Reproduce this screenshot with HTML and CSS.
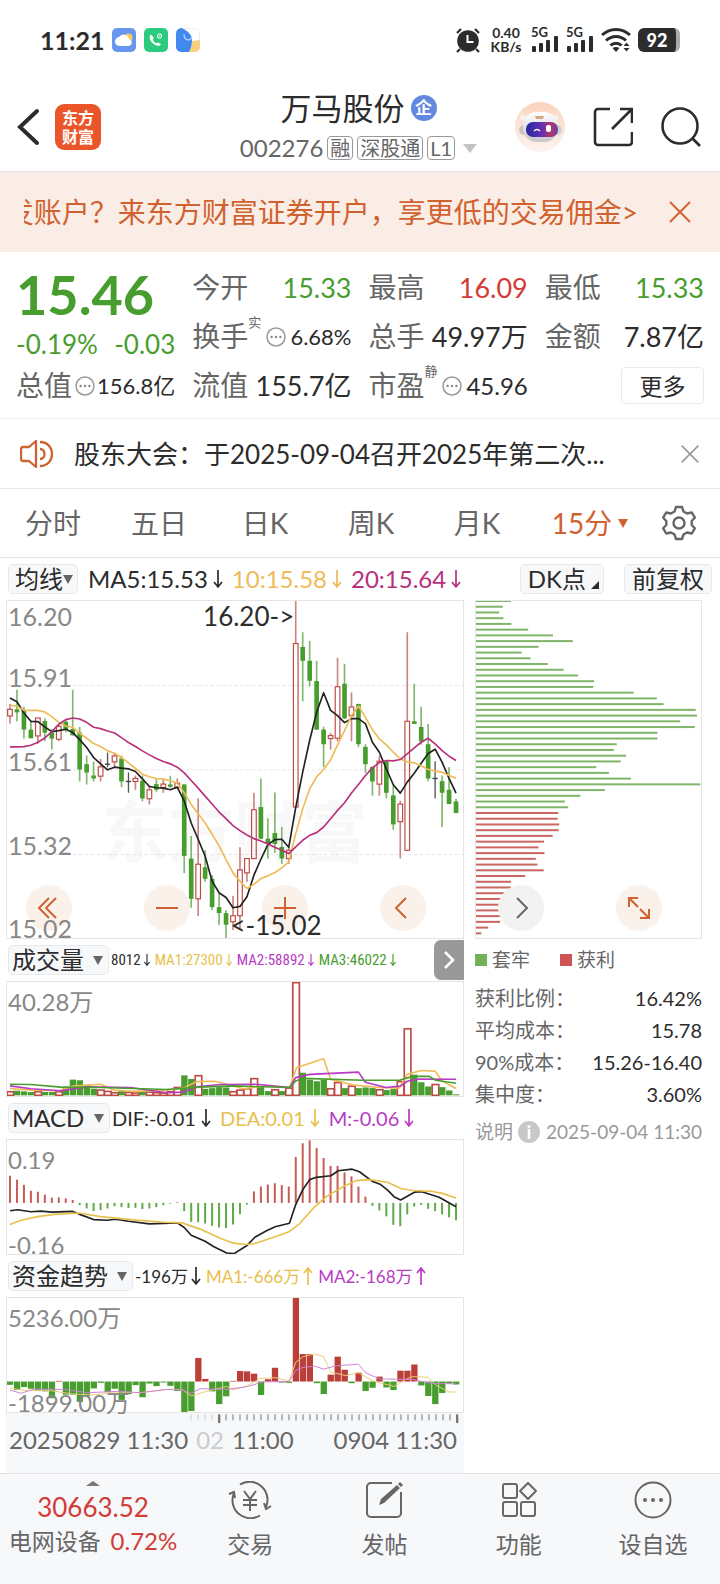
FILE: index.html
```html
<!DOCTYPE html>
<html lang="zh-CN">
<head>
<meta charset="utf-8">
<meta name="viewport" content="width=device-width, initial-scale=1">
<title>万马股份 002276</title>
<link rel="stylesheet" href="styles.css">
</head>
<body>
<svg class="defs" aria-hidden="true">
  <symbol id="down" viewBox="0 0 12 20"><path d="M6 1v17M2 13l4 5 4-5" fill="none" stroke="currentColor" stroke-width="1.700"/></symbol>
  <symbol id="up" viewBox="0 0 12 20"><path d="M6 19V2M2 7l4-5 4 5" fill="none" stroke="currentColor" stroke-width="1.700"/></symbol>
  <symbol id="dots" viewBox="0 0 20 20"><circle cx="10" cy="10" r="9" fill="none" stroke="#999" stroke-width="1.500"/><g fill="#888"><circle cx="5.600" cy="10" r="1.200"/><circle cx="10" cy="10" r="1.200"/><circle cx="14.400" cy="10" r="1.200"/></g></symbol>
  <symbol id="close" viewBox="0 0 24 24"><path d="M2 2l20 20M22 2L2 22" fill="none" stroke="currentColor" stroke-width="2"/></symbol>
  <symbol id="signal" viewBox="0 0 28 26"><g fill="#2c2c2c"><rect x="1" y="19" width="4" height="6" rx="1"/><rect x="8" y="16" width="4" height="9" rx="1"/><rect x="15" y="13" width="4" height="12" rx="1"/><rect x="23" y="9" width="4" height="16" rx="1"/></g></symbol>
</svg>

<div class="status">
  <span class="clock">11:21</span>
  <span class="apps">
    <svg width="24" height="24" viewBox="0 0 24 24"><rect width="24" height="24" rx="5" fill="#6696f0"/><circle cx="16.500" cy="9.500" r="4" fill="#f6c95c"/><path d="M8 18a4.500 4.500 0 0 1-1-9 5.500 5.500 0 0 1 10 2 3.600 3.600 0 0 1 0 7z" fill="#fff"/></svg>
    <svg width="24" height="24" viewBox="0 0 24 24"><rect width="24" height="24" rx="5" fill="#2dcb7d"/><path d="M7 6.500c-2.500 2-1 6 1.500 8.500s6.500 4 8.500 1.500l-2.700-2-2 .8c-1.800-.8-2.800-2-3.500-3.600l1-1.900z" fill="#fff"/><circle cx="15.500" cy="8" r="2.200" fill="none" stroke="#fff"/><path d="M14 9.500l3-3" stroke="#fff"/></svg>
    <svg width="24" height="24" viewBox="0 0 24 24"><rect x=".5" y=".5" width="23" height="23" rx="5" fill="#fff" stroke="#eee"/><path d="M5 0c6 2 11 6 11 13 0 5-1 8-3 11H5a5 5 0 0 1-5-5V6a6 6 0 0 1 5-6z" fill="#4189ee"/><path d="M16 13l8-1v7a5 5 0 0 1-5 5h-6c2-3 3-6 3-11z" fill="#f7cf7d"/><path d="M8 6c0 7 7 8 8 2" fill="none" stroke="#b9d6ff" stroke-width="1.200"/></svg>
  </span>
  <span class="system">
    <svg width="26" height="26" viewBox="0 0 26 26"><circle cx="13" cy="14" r="10.800" fill="#2c2c2c"/><path d="M2 6l4-4M24 6l-4-4M5 22l-3 3M21 22l3 3" stroke="#2c2c2c" stroke-width="2.200"/><path d="M12.500 8v7h6" fill="none" stroke="#fff" stroke-width="2"/></svg>
    <span class="speed"><b>0.40</b><b>KB/s</b></span>
    <span class="cell"><b>5G</b><svg width="28" height="26"><use href="#signal"/></svg></span>
    <span class="cell"><b>5G</b><svg width="28" height="26"><use href="#signal"/></svg></span>
    <svg width="30" height="26" viewBox="0 0 30 26"><g fill="none" stroke="#2c2c2c" stroke-width="3"><path d="M1 8c8-7.500 20-7.500 28 0"/><path d="M5 13.500c6-5.500 14-5.500 20 0"/><path d="M9.500 18.500c3-3 8-3 11 0"/></g><path d="M11.500 21c2-1.500 5-1.500 7 0L15 25zM22.500 19l3-3.500 3 3.500zM22.500 21l3 3.500 3-3.500z" fill="#2c2c2c"/></svg>
    <span class="battery">92</span>
  </span>
</div>

<header class="header">
  <div class="header-side">
    <button class="icon-btn" aria-label="返回"><svg width="24" height="38" viewBox="0 0 24 38"><path d="M21 3L4 19l17 16" fill="none" stroke="#2c2c2c" stroke-width="4" stroke-linecap="round"/></svg></button>
    <div class="logo"><span>东方</span><span>财富</span></div>
  </div>
  <div class="title">
    <h1>万马股份<span class="badge">企</span></h1>
    <div class="code">002276<i>融</i><i>深股通</i><i>L1</i><span class="tri tri-light"></span></div>
  </div>
  <div class="header-side header-right">
    <svg width="50" height="50" viewBox="0 0 50 50"><defs><linearGradient id="peach" x2="0" y2="1"><stop stop-color="#fbd3bd"/><stop offset="1" stop-color="#fdf5f1"/></linearGradient><linearGradient id="visor"><stop stop-color="#29289c"/><stop offset=".45" stop-color="#5b2fb4"/><stop offset=".8" stop-color="#b33768"/><stop offset="1" stop-color="#5b46b0"/></linearGradient><linearGradient id="shell" x2="0" y2="1"><stop stop-color="#fff"/><stop offset="1" stop-color="#c9c4ca"/></linearGradient></defs><circle cx="25" cy="25" r="25" fill="url(#peach)"/><circle cx="9" cy="28" r="5" fill="#c9c3c6"/><circle cx="42" cy="28" r="5" fill="#d6cfd1"/><path d="M10 19c-6-1-6-4-3-8 1 4 5 3 7 2M38 19c7-1 6-4 3-7 0 3-3 3-6 1" fill="#f7f2f1"/><rect x="8" y="10" width="35" height="30" rx="14" fill="url(#shell)"/><rect x="11" y="20" width="32" height="15" rx="7" fill="url(#visor)"/><path d="M20 14h9l-1 3h-7z" fill="#dba880"/><path d="M19 29q3-3 6 0" fill="none" stroke="#fff" stroke-width="1.500"/><rect x="31" y="23" width="5" height="7" rx="2" fill="#fff"/></svg>
    <button class="icon-btn" aria-label="分享"><svg width="40" height="40" viewBox="0 0 40 40"><path d="M17 2H5a3 3 0 0 0-3 3v30a3 3 0 0 0 3 3h31a3 3 0 0 0 3-3V25M27 2h12v14M38 3L19 22" fill="none" stroke="#2c2c2c" stroke-width="2.600"/></svg></button>
    <button class="icon-btn" aria-label="搜索"><svg width="40" height="40" viewBox="0 0 40 40"><circle cx="19" cy="19" r="17.500" fill="none" stroke="#2c2c2c" stroke-width="2.600"/><path d="M31 31l8 8" stroke="#2c2c2c" stroke-width="2.600"/></svg></button>
  </div>
</header>

<div class="banner">
  <a class="banner-text" href="#open">发账户？来东方财富证券开户，享更低的交易佣金&gt;</a>
  <button class="icon-btn orange" aria-label="关闭"><svg width="24" height="24"><use href="#close"/></svg></button>
</div>

<section class="quote">
  <div class="price down-c">
    <strong>15.46</strong>
    <div class="change"><span>-0.19%</span><span>-0.03</span></div>
  </div>
  <div class="item"><span>今开</span><b class="down-c">15.33</b></div>
  <div class="item"><span>最高</span><b class="up-c">16.09</b></div>
  <div class="item"><span>最低</span><b class="down-c">15.33</b></div>
  <div class="item"><span>换手<sup>实</sup></span><svg width="20" height="20"><use href="#dots"/></svg><b class="small">6.68%</b></div>
  <div class="item"><span>总手</span><b>49.97万</b></div>
  <div class="item"><span>金额</span><b>7.87亿</b></div>
  <div class="item"><span>总值</span><svg width="20" height="20"><use href="#dots"/></svg><b class="small">156.8亿</b></div>
  <div class="item"><span>流值</span><b>155.7亿</b></div>
  <div class="item"><span>市盈<sup>静</sup></span><svg width="20" height="20"><use href="#dots"/></svg><b class="mid">45.96</b></div>
  <div class="item end"><button class="more">更多</button></div>
</section>

<div class="notice">
  <svg width="34" height="30" viewBox="0 0 34 30"><g fill="none" stroke="#d0622f" stroke-width="2.300" stroke-linejoin="round"><path d="M16 2v26l-7-6H3a2 2 0 0 1-2-2V10a2 2 0 0 1 2-2h6z"/><path d="M20 10c6 0 6 10 0 10M20 3c16 0 16 24 0 24"/></g></svg>
  <a href="#notice">股东大会：于2025-09-04召开2025年第二次...</a>
  <button class="icon-btn gray" aria-label="关闭"><svg width="20" height="20"><use href="#close"/></svg></button>
</div>

<nav class="tabs">
  <button>分时</button><button>五日</button><button>日K</button><button>周K</button><button>月K</button>
  <button class="active">15分<span class="tri"></span></button>
  <button class="gear" aria-label="设置"><svg width="36" height="36" viewBox="0 0 36 36"><path d="M15 2h6l1.500 4.500 3.500 2 4.800-1 3 5.200L30.700 16v4l3.100 3.300-3 5.200-4.800-1-3.500 2L21 34h-6l-1.500-4.500-3.500-2-4.800 1-3-5.200L5.300 20v-4l-3.100-3.300 3-5.200 4.800 1 3.500-2z" fill="none" stroke="#666" stroke-width="2.400" stroke-linejoin="round"/><circle cx="18" cy="18" r="5.500" fill="none" stroke="#666" stroke-width="2.400"/></svg></button>
</nav>

<div class="toolbar">
  <label class="pick tight"><select aria-label="指标"><option>均线</option></select></label>
  <div class="legend large"><span>MA5:15.53<svg><use href="#down"/></svg></span><span class="yellow">10:15.58<svg><use href="#down"/></svg></span><span class="magenta">20:15.64<svg><use href="#down"/></svg></span></div>
  <button class="chip dk">DK点</button>
  <button class="chip">前复权</button>
</div>

<main class="board">
  <div class="charts">
    <div class="plot tall">
      <svg class="canvas" id="kline" viewBox="0 0 1374 1014" preserveAspectRatio="none"></svg>
      <div class="rail left-rail">
        <button class="round" aria-label="最早"><svg width="24" height="24" viewBox="0 0 24 24"><path d="M12 2L2 12l10 10M19 2L9 12l10 10"/></svg></button>
        <button class="round" aria-label="缩小"><svg width="24" height="24" viewBox="0 0 24 24"><path d="M1 12h22"/></svg></button>
        <button class="round" aria-label="放大"><svg width="24" height="24" viewBox="0 0 24 24"><path d="M1 12h22M12 1v22"/></svg></button>
        <button class="round" aria-label="向左"><svg width="24" height="24" viewBox="0 0 24 24"><path d="M15 2L5 12l10 10"/></svg></button>
      </div>
      <span class="axis a0">16.20</span><span class="axis a1">15.91</span><span class="axis a2">15.61</span><span class="axis a3">15.32</span><span class="axis a4">15.02</span>
      <span class="mark high">16.20-&gt;</span><span class="mark low">&lt;-15.02</span>
    </div>
    <div class="head">
      <label class="pick"><select aria-label="指标"><option>成交量</option></select></label>
      <div class="legend narrow"><span>8012<svg><use href="#down"/></svg></span><span class="yellow2">MA1:27300<svg><use href="#down"/></svg></span><span class="purple">MA2:58892<svg><use href="#down"/></svg></span><span class="green">MA3:46022<svg><use href="#down"/></svg></span></div>
      <button class="expand" aria-label="展开"><svg width="12" height="20" viewBox="0 0 12 20"><path d="M2 2l8 8-8 8" fill="none" stroke="#fff" stroke-width="2.600"/></svg></button>
    </div>
    <div class="plot">
      <svg class="canvas" id="volume" viewBox="0 0 1374 348" preserveAspectRatio="none"></svg>
      <span class="axis top">40.28万</span>
    </div>
    <div class="head">
      <label class="pick"><select aria-label="指标"><option>MACD</option></select></label>
      <div class="legend"><span>DIF:-0.01<svg><use href="#down"/></svg></span><span class="yellow2">DEA:0.01<svg><use href="#down"/></svg></span><span class="purple">M:-0.06<svg><use href="#down"/></svg></span></div>
    </div>
    <div class="plot">
      <svg class="canvas" id="macd" viewBox="0 0 1374 348" preserveAspectRatio="none"></svg>
      <span class="axis top">0.19</span><span class="axis base">-0.16</span>
    </div>
    <div class="head">
      <label class="pick"><select aria-label="指标"><option>资金趋势</option></select></label>
      <div class="legend mid-narrow"><span>-196万<svg><use href="#down"/></svg></span><span class="yellow2">MA1:-666万<svg><use href="#up"/></svg></span><span class="purple">MA2:-168万<svg><use href="#up"/></svg></span></div>
    </div>
    <div class="plot">
      <svg class="canvas" id="flow" viewBox="0 0 1374 348" preserveAspectRatio="none"></svg>
      <span class="axis top">5236.00万</span><span class="axis base">-1899.00万</span>
    </div>
    <div class="timeline">
      <svg id="ticks" viewBox="0 0 1374 30" preserveAspectRatio="none"></svg>
      <div class="times"><span>20250829 11:30</span><span class="faded">02</span><span>11:00</span><span class="last">0904 11:30</span></div>
    </div>
  </div>

  <aside class="chips">
    <div class="plot tall">
      <svg class="canvas" id="cost" viewBox="0 0 681 1014" preserveAspectRatio="none"></svg>
      <div class="rail right-rail">
        <button class="round plain" aria-label="向右"><svg width="24" height="24" viewBox="0 0 24 24"><path d="M8 2l10 10L8 22"/></svg></button>
        <button class="round" aria-label="全屏"><svg width="24" height="24" viewBox="0 0 24 24"><path d="M11 2H2v9M2 2l9 9M13 22h9v-9M22 22l-9-9"/></svg></button>
      </div>
    </div>
    <div class="keys"><span class="key trapped">套牢</span><span class="key profit">获利</span></div>
    <dl>
      <div><dt>获利比例：</dt><dd>16.42%</dd></div>
      <div><dt>平均成本：</dt><dd>15.78</dd></div>
      <div><dt>90%成本：</dt><dd>15.26-16.40</dd></div>
      <div><dt>集中度：</dt><dd>3.60%</dd></div>
    </dl>
    <div class="explain"><span>说明</span><span class="info">i</span><time>2025-09-04 11:30</time></div>
  </aside>
</main>

<nav class="dock">
  <a class="index" href="#index"><span class="caret"></span><b>30663.52</b><span>电网设备 <em>0.72%</em></span></a>
  <a href="#trade"><svg width="44" height="38" viewBox="0 0 44 38"><g fill="none" stroke="#666" stroke-width="2"><path d="M12 3.500A18 18 0 0 1 38 26M32 34.500A18 18 0 0 1 6 12M1 13l5-2 1 6M43 25l-5 3-2-6"/><path d="M16 10l6 8 6-8M22 18v12M15 19h14M15 24h14"/></g></svg><span>交易</span></a>
  <a href="#post"><svg width="38" height="38" viewBox="0 0 38 38"><path d="M27 2H6a4 4 0 0 0-4 4v26a4 4 0 0 0 4 4h26a4 4 0 0 0 4-4V11" fill="none" stroke="#666" stroke-width="2"/><path d="M14 24l2-6L32 4l3 3-16 15zM33 3l2-2 3 3-2 2z" fill="#666"/></svg><span>发帖</span></a>
  <a href="#tools"><svg width="38" height="38" viewBox="0 0 38 38"><g fill="none" stroke="#666" stroke-width="2"><rect x="3" y="3" width="14" height="14" rx="2"/><rect x="3" y="21" width="14" height="14" rx="2"/><rect x="21" y="21" width="14" height="14" rx="2"/><path d="M28 2l8 8-8 8-8-8z" stroke-linejoin="round"/></g></svg><span>功能</span></a>
  <a href="#watch"><svg width="38" height="38" viewBox="0 0 38 38"><circle cx="19" cy="19" r="17.500" fill="none" stroke="#666" stroke-width="2"/><g fill="#666"><circle cx="11" cy="19" r="2"/><circle cx="19" cy="19" r="2"/><circle cx="27" cy="19" r="2"/></g></svg><span>设自选</span></a>
</nav>
<script src="charts.js"></script>
</body>
</html>
```
FILE: styles.css
```css
* { box-sizing: border-box; }
body {
  margin: 0;
  background: #fff;
  color: #2c2c2c;
  font-family: Lato, "Noto Sans CJK SC", sans-serif;
  font-size: 20px;
  line-height: 1;
}
button, select { font: inherit; color: inherit; background: none; border: 0; padding: 0; margin: 0; }
a { color: inherit; text-decoration: none; }
svg { display: block; flex: none; }
b, em, i { font-weight: 400; font-style: normal; }
.defs { position: absolute; width: 0; height: 0; }
.icon-btn { display: flex; align-items: center; justify-content: center; }
.orange { color: #d0622f; }
.gray { color: #999; }
.up-c { color: #d23c37; }
.down-c { color: #479d2e; }
.tri { display: inline-block; border: 6px solid transparent; border-top: 9px solid currentColor; border-bottom: 0; }
.tri-light { border-width: 9px 7px 0; color: #c4c4c4; }

.status { display: flex; align-items: center; height: 80px; padding: 0 40px; }
.clock { width: 72px; font-size: 25px; font-weight: 700; }
.apps { display: flex; gap: 8px; }
.system { display: flex; align-items: center; gap: 7px; margin-left: auto; }
.speed { display: flex; flex-direction: column; align-items: center; width: 36px; }
.speed b { font-size: 14px; line-height: 14px; font-weight: 700; }
.cell { position: relative; }
.cell b { position: absolute; left: 0; top: 0; font-size: 13px; line-height: 10px; font-weight: 700; }
.battery { width: 42px; height: 24px; border-radius: 6px; border-right: 4px solid #aaa; background: #2c2c2c; color: #fff; font-size: 18px; line-height: 24px; font-weight: 900; text-align: center; }

.header { display: flex; align-items: center; height: 92px; padding: 2px 19px 0 16px; border-bottom: 1px solid #e4e4e8; }
.header-side { display: flex; align-items: center; flex: 1; gap: 15px; }
.header-right { justify-content: flex-end; gap: 28px; }
.logo { display: flex; flex-direction: column; align-items: center; justify-content: center; width: 46px; height: 46px; border-radius: 9px; background: #ea562a; color: #fff; font-size: 16px; line-height: 19px; font-weight: 700; }
.title { display: flex; flex-direction: column; align-items: center; gap: 7px; }
.title h1 { display: flex; align-items: center; gap: 6px; margin: 0; font-size: 31px; line-height: 36px; font-weight: 400; }
.badge { width: 26px; height: 26px; border-radius: 50%; background: #6388e0; color: #fff; font-size: 17px; line-height: 25px; font-weight: 700; text-align: center; }
.code { display: flex; align-items: center; gap: 4px; font-size: 24px; line-height: 30px; color: #666; }
.code i { border: 1px solid #999; border-radius: 4px; padding: 0 2px; font-size: 20px; line-height: 22px; }
.code .tri { margin-left: 4px; }

.banner { display: flex; align-items: center; justify-content: space-between; height: 80px; padding: 0 28px 0 24px; background: #faede6; color: #d0622f; }
.banner-text { display: flex; justify-content: flex-end; width: 614px; overflow: hidden; font-size: 28px; line-height: 40px; white-space: nowrap; }

.quote { display: grid; grid-template-columns: repeat(4, 1fr); grid-template-rows: repeat(3, 49px); column-gap: 17px; padding: 11px 16px 8px; border-bottom: 1px solid #f0f0f0; }
.price { grid-row: span 2; }
.price strong { display: block; font-size: 54px; line-height: 64px; font-weight: 700; }
.change { display: flex; justify-content: space-between; font-size: 26px; line-height: 34px; }
.item { display: flex; align-items: center; justify-content: space-between; white-space: nowrap; color: #666; font-size: 28px; line-height: 49px; }
.item span { display: flex; }
.item sup { font-size: 13px; line-height: 20px; }
.item b { color: #2c2c2c; font-size: 27px; }
.item b.small { font-size: 22px; }
.item b.mid { font-size: 24px; }
.item b.up-c { color: #d23c37; }
.item b.down-c { color: #479d2e; }
.end { justify-content: flex-end; }
.more { width: 83px; height: 37px; border: 1px solid #eaeaea; border-radius: 4px; color: #2c2c2c; font-size: 23px; line-height: 34px; }

.notice { display: flex; align-items: center; height: 70px; padding: 0 20px; border-bottom: 1px solid #e8e8e8; font-size: 26px; }
.notice a { margin-left: 20px; line-height: 36px; white-space: nowrap; }
.notice button { margin-left: auto; }

.tabs { display: grid; grid-template-columns: repeat(5, 106fr) 120fr 70fr; height: 69px; border-bottom: 1px solid #e4e4e4; color: #666; font-size: 28px; }
.tabs button { display: flex; align-items: center; justify-content: center; gap: 6px; }
.tabs .active { color: #d0622f; }
.tabs .gear { padding-right: 12px; }
.tabs .tri { border-width: 9px 5px 0; }

.toolbar { display: flex; align-items: center; height: 42px; padding: 0 8px; }
.pick { position: relative; display: flex; align-items: center; height: 30px; padding: 0 24px 0 3px; border: 1px solid #e6e8ec; border-radius: 5px; background: #f7f8fa; font-size: 24px; }
.pick select { appearance: none; height: 28px; line-height: 28px; }
.pick::after { content: ""; position: absolute; right: 5px; top: 10px; border: 5px solid transparent; border-top: 9px solid #666; border-bottom: 0; }
.pick.tight { padding: 0 14px 0 6px; }
.pick.tight::after { right: 4px; }
.legend { display: flex; gap: 8px; margin-left: 2px; font-size: 20px; white-space: nowrap; }
.legend span { display: flex; align-items: center; gap: 4px; }
.legend svg { width: 12px; height: 20px; }
.legend.large { margin-left: 10px; font-size: 24px; gap: 8px; }
.legend.narrow { font-family: "Liberation Sans Narrow", "Roboto Condensed", Lato, sans-serif; font-size: 15px; gap: 4px; }
.legend.narrow svg { width: 8px; }
.legend.narrow span, .legend.mid-narrow span { gap: 2px; }
.legend.mid-narrow { font-size: 17px; gap: 4px; }
.yellow { color: #eebb59; }
.yellow2 { color: #e8c04c; }
.magenta { color: #b9307c; }
.purple { color: #b83bc4; }
.green { color: #479d2e; }
.chip { position: relative; height: 30px; padding: 0 7px; border: 1px solid #e6e8ec; border-radius: 5px; background: #f7f8fa; font-size: 24px; line-height: 28px; }
.dk { margin-left: auto; margin-right: 20px; padding-right: 17px; }
.dk::after { content: ""; position: absolute; right: 4px; bottom: 4px; border-left: 8px solid transparent; border-bottom: 8px solid #2c2c2c; }

.board { display: grid; grid-template-columns: 458fr 227fr; column-gap: 11px; padding: 0 18px 0 6px; }
.plot { position: relative; height: 116px; border: 1px solid #e5e5e5; }
.plot.tall { height: 339px; }
.canvas { width: 100%; height: 100%; }
.watermark { font-size: 200px; font-weight: 700; fill: #f8f8f8; }
.axis { position: absolute; left: 1px; font-size: 25px; line-height: 30px; color: #888; }
.a0 { top: 0; }
.axis.top { top: 5px; font-size: 24px; }
.a1 { top: 18%; }
.a2 { top: 43%; }
.a3 { top: 68%; }
.a4 { bottom: -5px; }
.axis.base { bottom: -6px; font-size: 24px; }
.mark { position: absolute; font-size: 26px; line-height: 30px; }
.high { right: 37%; top: 0; }
.low { left: 49%; bottom: -2px; }
.rail { position: absolute; bottom: 7px; display: flex; gap: 72px; }
.left-rail { left: 19px; }
.right-rail { left: 22px; }
.round { display: flex; align-items: center; justify-content: center; width: 46px; height: 46px; border-radius: 50%; background: #fbf1eb; }
.round path { fill: none; stroke: #d0622f; stroke-width: 2; }
.plain { background: #f2f2f2; }
.plain path { stroke: #666; }
.head { display: flex; align-items: center; height: 42px; padding-left: 2px; }
.expand { display: flex; align-items: center; justify-content: center; width: 30px; height: 40px; margin-left: auto; border-radius: 7px 0 0 7px; background: #999; }
.timeline { height: 60px; background: #f7f8fa; }
.timeline svg { width: 100%; height: 10px; }
.times { display: flex; gap: 8px; padding: 0 7px 0 3px; font-size: 24px; line-height: 34px; color: #666; white-space: nowrap; }
.faded { color: #ccc; }
.last { margin-left: auto; }

.keys { display: flex; gap: 30px; margin-top: 6px; color: #666; font-size: 19px; line-height: 30px; }
.key { display: flex; align-items: center; gap: 5px; }
.key::before { content: ""; width: 12px; height: 12px; background: #72b158; }
.profit::before { background: #cd5450; }
dl { margin: 7px 0 0; line-height: 32px; }
dl div { display: flex; justify-content: space-between; white-space: nowrap; }
dt { color: #666; }
dd { margin: 0; }
.explain { display: flex; align-items: center; margin-top: 6px; color: #999; font-size: 19px; line-height: 32px; white-space: nowrap; }
.info { width: 22px; height: 22px; margin-left: 5px; border-radius: 50%; background: #c8c8c8; color: #fff; font-weight: 700; line-height: 21px; text-align: center; }
.explain time { margin-left: auto; }

.dock { display: grid; grid-template-columns: 183px repeat(4, 1fr); height: 111px; border-top: 1px solid #e2e2e4; background: #f7f8fa; color: #666; font-size: 23px; }
.dock a { display: flex; flex-direction: column; align-items: center; gap: 8px; padding-top: 7px; line-height: 34px; }
.dock .index { gap: 0; padding-left: 3px; white-space: nowrap; }
.index b { margin-top: 4px; font-size: 26px; color: #d23c37; }
.index em { margin-left: 4px; font-size: 24px; color: #d23c37; }
.caret { border: 7px solid transparent; border-top: 0; border-bottom: 5px solid #777; }
```
FILE: charts.js
```js
const RED = '#bd4a43', GREEN = '#479d2e', DARK = '#222', AMBER = '#eebb59', PINK = '#b9307c', VIOLET = '#b83bc4';
const cx = i => 9 + 21 * i;
const rect = (x, y, w, h, fill, stroke, sw = 3.5) =>
  `<rect x="${x}" y="${y}" width="${w}" height="${h}" fill="${fill}"${stroke ? ` stroke="${stroke}" stroke-width="${sw}"` : ''}/>`;
const line = (points, color, width = 5) =>
  `<polyline points="${points.map(p => p.join()).join(' ')}" fill="none" stroke="${color}" stroke-width="${width}" stroke-linejoin="round"/>`;
const series = (ys, top) => ys.map((y, i) => [cx(i), y - top]);
const free = (pts, top) => pts.map(([x, y]) => [x - 18, y - top]);
const put = (id, html) => { document.getElementById(id).innerHTML = html; };

/* colour, high, low, body top, body bottom */
const candles = [
  'r 325 384 341 361','g 282 377 341 350','g 333 429 346 402','g 375 428 402 428','r 367 445 367 421','g 368 437 376 411','g 400 462 411 429','r 385 437 392 431','g 370 410 378 402','g 282 420 400 419',
  'g 394 558 411 522','g 480 567 506 531','g 498 558 540 549','r 490 558 514 542','k 471 515 504 508','r 473 515 481 499','g 480 575 489 558','k 531 592 556 560','r 540 584 549 558','g 540 618 556 609',
  'r 570 627 583 610','g 548 590 566 583','r 550 592 566 576','g 541 577 567 574','r 549 580 563 576','g 567 834 567 782','g 722 938 790 911','r 609 963 807 911','g 765 860 816 851','g 840 945 851 936',
  'g 895 990 936 954','g 945 1031 954 989','r 902 1005 962 980','r 756 1000 824 962','r 790 860 790 833','r 592 791 643 790','g 549 731 635 730','g 669 790 730 746','g 591 773 713 746','g 695 806 755 790',
  'r 755 806 765 790','r 15 636 143 635','g 109 317 153 195','g 135 272 195 255','g 195 403 256 402','g 393 515 402 446','r 412 462 420 429','r 186 437 273 428','g 204 370 264 368','r 290 437 334 360',
  'g 324 455 325 446','g 446 532 454 506','g 514 601 514 558','r 480 601 497 566','g 495 609 497 592','g 567 704 600 687','r 616 790 626 679','r 109 766 377 765','g 264 385 377 385','g 333 447 394 437',
  'g 385 557 446 549','k 497 609 547 551','g 540 695 557 592','g 515 626 583 626','g 610 653 618 653'];
const ma5 = [307,318,352,377,378,394,408,405,401,411,432,456,486,505,523,515,518,520,528,550,573,577,578,583,575,617,683,732,783,858,893,907,938,934,905,840,792,748,733,732,756,636,530,434,350,291,344,360,381,369,369,384,440,470,520,568,593,560,533,503,474,461,500,549,593];
const ma10 = [328,332,344,344,344,349,363,380,391,395,413,428,444,453,466,473,486,502,519,536,544,549,551,556,563,592,627,655,683,717,752,793,833,858,880,868,850,842,832,818,800,715,640,580,544,522,493,448,405,360,331,365,402,430,448,470,490,499,502,511,522,527,530,540,548];
const ma20 = [454,454,453,449,440,427,408,386,372,367,370,380,395,399,406,412,426,441,453,466,478,489,498,505,515,532,555,578,602,626,650,670,691,706,719,730,737,746,756,765,775,755,735,720,712,695,670,645,622,593,567,540,517,501,495,496,492,475,457,440,428,445,465,482,495];

let k = '<text class="watermark" x="285" y="770">东方财富</text>';
[254, 508, 763].forEach(y => { k += `<path d="M0 ${y}H1374" stroke="#e8e8e8" stroke-width="3" stroke-dasharray="12 6"/>`; });
candles.forEach((row, i) => {
  const [c, ...v] = row.split(' ');
  const [hi, lo, t, b] = v.map(n => n - 15);
  const x = cx(i);
  if (c === 'k') { k += rect(x - 2, hi, 4, lo - hi, '#555') + rect(x - 8, t, 16, 4, '#444'); return; }
  if (c === 'g') { k += rect(x - 2.5, hi, 5, lo - hi, '#7fb96d') + rect(x - 7, t, 14, b - t, GREEN); return; }
  k += rect(x - 2.5, hi, 5, t - hi, '#ca8783') + rect(x - 2.5, b, 5, lo - b, '#ca8783') + rect(x - 7, t, 14, b - t, 'none', RED);
});
put('kline', k + line(series(ma5, 15), DARK) + line(series(ma10, 15), AMBER) + line(series(ma20, 15), PINK));

const volumes = 'r472 g470 g472 g474 r472 g474 g474 r472 g457 g436 g438 g452 g464 r467 r471 r475 g470 r474 r476 g472 r473 r475 r476 r472 r459 g423 g434 r423 g464 g462 g459 g460 r472 r467 r463 r432 g458 g471 r466 g471 r461 r139 g415 g436 g441 g437 r463 r444 g462 r455 g462 g460 g462 r466 g468 g465 r441 r280 g421 g444 g457 r450 g459 g469 g481'.split(' ');
put('volume', volumes.map((v, i) => {
  const y = v.slice(1) - 138, h = 346 - y;
  return v[0] === 'r' ? rect(cx(i) - 9, y + 1, 20, h - 1, '#fff', RED, 5) : rect(cx(i) - 9, y, 19, h, GREEN);
}).join('')
  + line(free([[27,463],[90,468],[174,470],[216,456],[300,450],[340,468],[400,472],[490,468],[550,462],[590,442],[645,441],[680,450],[730,464],[800,455],[870,460],[890,400],[910,393],[972,372],[993,435],[1060,452],[1140,460],[1200,462],[1224,420],[1266,408],[1308,410],[1329,440],[1371,463]], 138), AMBER)
  + line(free([[27,455],[90,464],[180,470],[260,458],[390,460],[500,476],[550,474],[590,458],[660,451],[770,450],[870,460],[888,430],[930,420],[1077,413],[1098,444],[1160,460],[1203,456],[1224,441],[1260,434],[1371,435]], 138), VIOLET)
  + line(free([[27,450],[90,451],[180,459],[300,460],[500,466],[600,459],[700,455],[870,460],[888,440],[910,432],[1090,438],[1200,438],[1240,426],[1290,426],[1310,438],[1371,447]], 138), GREEN));

const macd = [242,254,270,288,291,300,309,308,311,316,332,342,350,347,342,335,338,341,340,344,342,338,332,327,323,350,383,384,388,395,400,402,391,359,330,290,275,269,265,271,275,185,143,134,157,188,212,212,232,244,275,306,334,348,366,392,396,360,336,331,343,350,360,369,378];
put('macd', macd.map((y, i) => y < 325 ? rect(cx(i) - 3, y - 133, 6, 325 - y, '#c75c57') : rect(cx(i) - 3, 192, 6, y - 325, '#5dab48')).join('')
  + line(free([[27,349],[50,346],[90,352],[120,350],[153,353],[216,351],[237,360],[279,376],[320,378],[345,375],[384,381],[447,389],[531,386],[552,400],[573,424],[615,442],[640,458],[680,478],[702,480],[740,456],[765,430],[800,410],[826,398],[869,387],[888,330],[909,285],[930,254],[950,247],[994,242],[1016,227],[1058,222],[1080,230],[1120,260],[1142,268],[1165,286],[1184,306],[1204,316],[1247,292],[1268,291],[1320,308],[1371,337]], 133), DARK)
  + line(free([[27,391],[60,378],[110,367],[160,360],[235,356],[300,367],[400,377],[490,384],[545,386],[600,405],[660,433],[700,448],[740,452],[765,449],[850,420],[869,412],[900,388],[940,342],[980,306],[1030,276],[1070,257],[1110,254],[1165,262],[1205,281],[1240,287],[1300,290],[1330,296],[1371,310]], 133), '#e8c04c'));

const flow = [394,410,401,406,413,414,435,382,424,424,446,429,405,388,416,406,440,422,395,432,390,398,387,397,413,477,474,312,376,414,453,429,382,352,353,360,425,377,342,387,388,129,300,300,389,422,363,308,348,389,357,413,403,369,402,410,351,351,332,396,428,453,419,390,393];
put('flow', flow.map((y, i) => y < 384 ? rect(cx(i) - 9, y - 129, 19, 384 - y, '#bb3f38') : rect(cx(i) - 9, 255, 19, y - 384, GREEN)).join('')
  + line(free([[27,403],[60,410],[150,412],[216,422],[280,425],[340,416],[420,418],[500,408],[545,408],[573,428],[620,414],[680,399],[700,409],[740,398],[780,375],[826,372],[868,382],[888,325],[912,307],[945,300],[972,308],[993,355],[1040,366],[1077,357],[1120,382],[1184,399],[1224,375],[1240,369],[1287,371],[1310,395],[1350,416],[1371,416]], 129), '#eecb75', 3)
  + line(free([[27,410],[60,420],[100,407],[190,408],[260,418],[350,414],[420,418],[500,408],[545,410],[573,420],[600,406],[680,408],[740,400],[790,385],[868,384],[888,350],[910,341],[945,337],[972,346],[1010,336],[1077,331],[1100,358],[1140,376],[1240,378],[1300,390],[1371,391]], 129), '#cd84d4', 3));

let t = '';
for (let i = 26; i < 65; i++) {
  const major = i === 30 || i === 64;
  t += rect(cx(i) - (major ? 3 : 1.5), 4, major ? 7 : 3, major ? 26 : 18, i < 30 ? '#ccc' : '#777');
}
put('ticks', t);

const ends = [138,113,102,115,139,190,265,325,221,170,197,249,297,341,389,387,509,579,600,697,701,650,694,581,581,458,449,486,470,396,434,501,711,422,348,301,311,281,279,284,282,264,238,221,239,213,218,237,181,138,138,138,128,121,115,115,105,69,48];
put('cost', ends.map((x, i) => rect(0, 17.24 * i - 3, x - 32, 6, i < 37 ? '#7fb569' : '#ca6561')).join(''));
```
